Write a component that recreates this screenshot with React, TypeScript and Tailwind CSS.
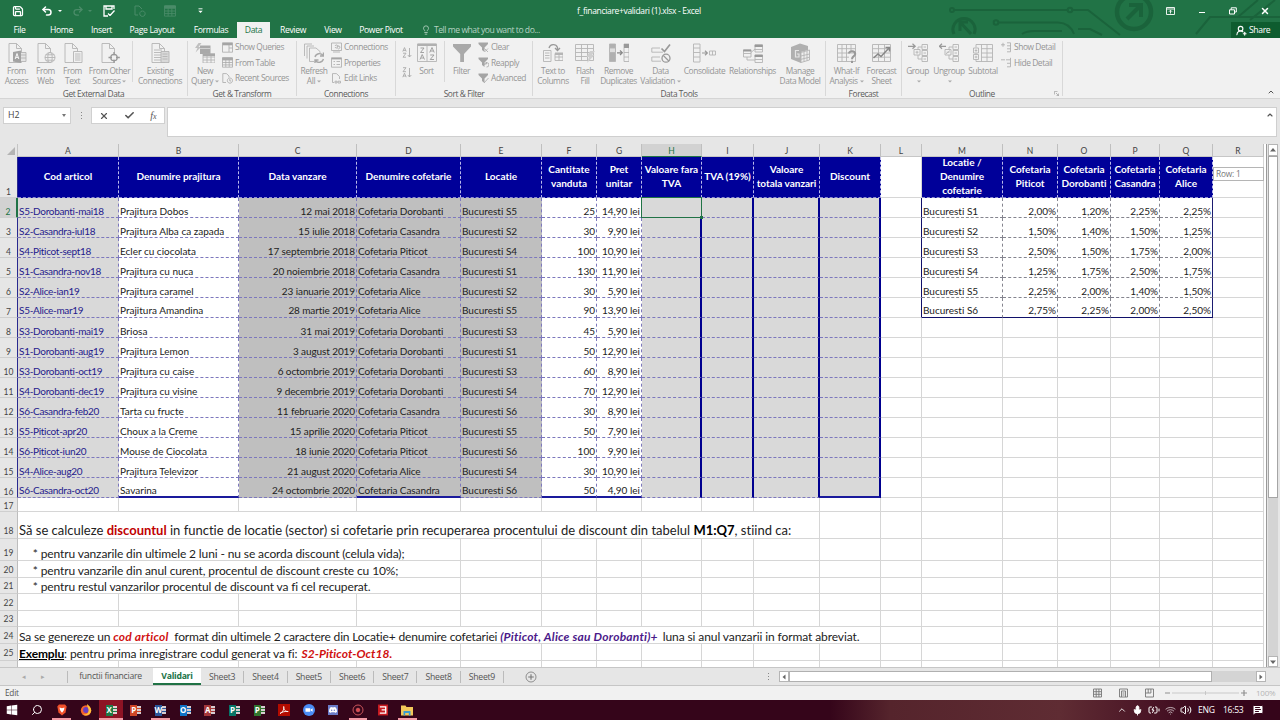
import type { ReactNode } from "react";
import { clsx } from "clsx";
import {
  BatteryCharging,
  Check,
  ChevronUp,
  Lightbulb,
  MessageSquareText,
  Mic,
  Redo2,
  Save,
  Search,
  Undo2,
  UserRoundPlus,
  Volume2,
  Wifi,
  X,
} from "lucide-react";
import { FaWindows } from "react-icons/fa";
import { SiDiscord } from "react-icons/si";

/* ---------- ribbon icons, drawn on a 20x20 box ---------- */

const Icon = ({ children, className = "size-5" }: { children: ReactNode; className?: string }) => (
  <svg viewBox="0 0 20 20" className={clsx("shrink-0", className)} fill="none" stroke="#b4b4b4" strokeWidth="0.9">
    {children}
  </svg>
);

const PAGE = "M2 .5H9.5L14.5 5.5V19.5H2ZM9.5 .5V5.5H14.5";

const FromAccess = () => (
  <Icon>
    <path d={PAGE} />
    <path d="M6 9 14 7.5V20L6 18.5Z" fill="#a2a2a2" stroke="none" />
    <path d="M8.2 16 10 10.5 11.8 16M8.8 14.4H11.2" stroke="#fff" />
    <path d="M14 9.5H19V18.5H14M14 12H19M14 15H19" fill="#e4e4e4" />
  </Icon>
);
const FromWeb = () => (
  <Icon>
    <path d={PAGE} />
    <circle cx="14" cy="14.5" r="5" fill="#f1f1f1" />
    <ellipse cx="14" cy="14.5" rx="2.2" ry="5" />
    <path d="M9 14.5H19M9.8 11.8H18.2M9.8 17.2H18.2" />
  </Icon>
);
const FromText = () => (
  <Icon>
    <path d={PAGE} />
    <path d="M10.5 8.5H19V19.5H10.5ZM12 11H17.5M12 13H17.5M12 15H17.5M12 17H17.5" fill="#f1f1f1" />
  </Icon>
);
const FromOther = () => (
  <Icon>
    <path d={PAGE} />
    <circle cx="14" cy="14.5" r="3.2" fill="#f1f1f1" stroke="#999" strokeWidth="1.3" />
    <path d="M14 9V12.6M14 16.4V20M8.5 14.5H12M16 14.5H19.8" stroke="#999" strokeWidth="1.3" />
  </Icon>
);
const Existing = () => (
  <Icon>
    <path d={PAGE} />
    <path d="M4 7H12M4 9.5H12M4 12H11M4 14.5H11M4 17H11" />
    <path d="M11 8.5H19V19.5H11ZM12.5 11H17.5M12.5 13.5H17.5M12.5 16H17.5" fill="#d9d9d9" />
  </Icon>
);
const NewQuery = () => (
  <Icon>
    <path d="M3.5 0 0 5H2.5L.5 9.5 6 4H3.5L6.500 0Z" fill="#c0c0c0" stroke="none" />
    <path d="M5 2.500H15.500V11H5Z" fill="#a9a9a9" stroke="none" />
    <path d="M5 5.500H15.500" stroke="#d5d5d5" />
    <path d="M8 11H20V20H8ZM8 14H20M8 17H20M12 11V20M16 11V20" fill="#f1f1f1" />
    <path d="M8 10.5H20V13H8Z" fill="#a9a9a9" stroke="none" />
  </Icon>
);
const Refresh = () => (
  <Icon>
    <path d="M.5 13V1H8M3 15.5V3H10M5.5 18.5V5H12L16 8.5V10M5.5 18.5H10" />
    <path
      d="M11 14A4.5 4.5 0 0 1 19 12.5M19.5 9.5V13H16M19.5 16A4.5 4.5 0 0 1 11.5 17.5M11 20.3V17H14.5"
      stroke="#a8a8a8"
      strokeWidth="1.4"
    />
  </Icon>
);
const SortBox = () => (
  <Icon>
    <path d="M.5 1H19.5V18.5H.5ZM10 1V18.5" />
    <path d="M.5 .7H19.5V3H.5Z" fill="#b0b0b0" stroke="none" />
    <path
      d="M3.5 5H7L3.5 9.5H7M3 16.5 5.2 11.5 7.5 16.5M4 15H6.7M12.7 9.5 15 4.5 17.2 9.5M13.5 8H16.3M13.2 12H17L13.2 16.5H17"
      stroke="#999"
    />
  </Icon>
);
const Funnel = () => (
  <Icon>
    <path d="M1 1H19V3.5L12 11V19H8.2V11L1 3.5Z" fill="#a9a9a9" stroke="none" />
  </Icon>
);
const TextToColumns = () => (
  <Icon>
    <path d="M.5 7.5H8V18.5H.5ZM2 10H6.5M2 12.5H6.5M2 15H6.5M12 10.5H20V17.5H12ZM12 14H20M16 10.5V17.5" />
    <path d="M12 9.5H20V12H12Z" fill="#b5b5b5" stroke="none" />
    <path d="M6 5A4.5 4.5 0 0 1 14.5 4.5V7M12 5 14.5 7.5 17 5" stroke="#999" strokeWidth="1.3" />
  </Icon>
);
const FlashFill = () => (
  <Icon>
    <path d="M.5 1.5H18.5V17.5H.5ZM.5 5.5H18.5M.5 9.5H18.5M.5 13.5H18.5M6.5 1.5V17.5M12.5 1.5V17.5" />
    <path d="M15 8H20L17 12H19.5L12 20 14 14H11.5Z" fill="#cfcfcf" stroke="none" />
  </Icon>
);
const RemoveDup = () => (
  <Icon>
    <path d="M.5 1H6.5V18.5H.5Z" fill="#b0b0b0" />
    <path d="M.5 5H6.5V9.5H.5Z" fill="#dedede" />
    <path d="M15 1H20V18.5H15ZM15 9.5H20M15 14H20" />
    <path d="M15 1H20V5H15Z" fill="#999" stroke="none" />
    <path d="M8 9.8H13M11 7.5 13.3 9.8 11 12" stroke="#888" strokeWidth="1.2" />
  </Icon>
);
const DataValidation = () => (
  <Icon>
    <path d="M9 5H.8V9.2H12M9 14H.8V18.2H10" />
    <path d="M10.5 5.5 13.5 8.5 19 1.5" stroke="#999" strokeWidth="1.7" />
    <circle cx="15" cy="15.2" r="4" stroke="#999" strokeWidth="1.3" />
    <path d="M12.2 12.4 17.8 18" stroke="#999" strokeWidth="1.3" />
  </Icon>
);
const Consolidate = () => (
  <Icon className="h-5 w-[23px]">
    <path d="M-1 1H5.5V19H-1ZM-1 5H5.5M-1 9.5H5.5M-1 14H5.5M15 8H21V12H15ZM18 8V12" />
    <path d="M7.5 10H12.5M10.5 7.8 12.8 10 10.5 12.2" stroke="#999" strokeWidth="1.2" />
  </Icon>
);
const Relationships = () => (
  <Icon>
    <path d="M.5 7H8V14H.5ZM.5 10.5H8M12 2H19.5V9H12ZM12 6.5H19.5M12 12H19.5V19.5H12ZM12 16.5H19.5M8 9.5 12 6M4 14V17H12" />
    <path d="M.3 6.5H8.2V8.6H.3ZM11.7 1.5H19.7V4H11.7ZM11.7 11.7H19.7V14H11.7Z" fill="#999" stroke="none" />
  </Icon>
);
const DataModel = () => (
  <Icon>
    <path d="M1 4 10 .5 18 3V7L11 9V20L1 16Z" fill="#b0b0b0" stroke="none" />
    <path d="M11 9.5 19.5 7V17L11 19.5ZM14 8.5V18.6M17 7.7V17.7M11 13 19.5 11M11 16.3 19.5 14.2" fill="#eee" />
    <path d="M9 7.500H5.500V14H9V11H7" stroke="#e5e5e5" strokeWidth="1.2" />
  </Icon>
);
const WhatIf = () => (
  <Icon>
    <path d="M.5 1.5H18.5V18.5H.5ZM.5 5.7H18.5M.5 10H18.5M.5 14.2H12M5 1.5V18.5M9.5 1.5V18.5M14 1.5V8" />
    <path d="M12 10.5C12 7.5 18.2 7.5 18.2 11 18.2 13.3 15 13 15 16.2M15 17.8V20" stroke="#999" strokeWidth="2" />
  </Icon>
);
const ForecastSheet = () => (
  <Icon>
    <path d="M.5 1.5H18.5V18.5H.5ZM.5 5.7H18.5M.5 10H18.5M.5 14.2H18.5M6.5 1.5V18.5M12.5 1.5V18.5" />
    <path d="M1.5 15 6 11 9 13.5 17 5M13.5 4.5H17.5V8.5" stroke="#888" strokeWidth="1.5" />
  </Icon>
);
const GroupIcon = ({ un }: { un?: boolean }) => (
  <Icon>
    <path d="M14 1.5H19.500V6.5H14ZM14 7.5H19.500V12.5H14ZM14 13.5H19.500V18.5H14ZM15.500 4H18M15.500 10H18M15.500 16H18M10 4H14M10 16H14M10 4V7M10 12V16" />
    <path d="M6 6.5H12V12H6ZM7.5 9.2H10.5" />
    {un ? <path d="M7 11 11 7.5" /> : <path d="M9 7.8V10.8" />}
    <path d={un ? "M0 3.3H7M3 .8 .4 3.3 3 5.8" : "M0 3.3H7M4.5 .8 7.2 3.3 4.5 5.8"} stroke="#999" strokeWidth="1.2" />
  </Icon>
);
const SubtotalIcon = () => (
  <Icon>
    <path d="M3 4.5V1.5H19.5V18.5H3V16M3 11V10M8.5 1.5V18.5M14 1.5V18.5M8.5 5.7H19.5M8.5 10H19.5M8.5 14.2H19.5M.5 5H5.5V10H.5ZM.5 11.5H5.5V16.5H.5ZM1.7 7.5H4.3M3 6.2V8.8M1.7 14H4.3M3 12.7V15.3" />
  </Icon>
);

const small = "size-[11px]";
const TableIcon = ({ className = small, stroke = "#a9a9a9" }: { className?: string; stroke?: string }) => (
  <svg viewBox="0 0 11 11" className={clsx("shrink-0", className)} fill="none" stroke={stroke} strokeWidth="0.8">
    <path d="M.5 .8H10.5V10.2H.5ZM.5 5.5H10.5M.5 7.9H10.5M3.8 3V10M7.2 3V10" />
    <path d="M.5 .8H10.5V3H.5Z" fill={stroke} />
  </svg>
);
const SmallSvg = ({ d, fill }: { d: string; fill?: string }) => (
  <svg viewBox="0 0 11 11" className={clsx("shrink-0", small)} fill="none" stroke="#a9a9a9" strokeWidth="0.8">
    {fill && <path d={fill} fill="#a5a5a5" stroke="none" />}
    <path d={d} />
  </svg>
);
const FUNNEL = "M.5 .5H10V2L6.5 5.5V10L4 8V5.5L.5 2Z";

/* ---------- ribbon parts ---------- */

const Caret = () => (
  <svg viewBox="0 0 4 3" className="ml-0.5 inline h-[3px] w-1 align-middle">
    <path d="M0 .5H4L2 2.5Z" fill="#aaa" />
  </svg>
);

type BigProps = { icon: ReactNode; top: string; bottom?: string; caret?: boolean; width: string };
const Big = ({ icon, top, bottom, caret, width }: BigProps) => (
  <div className={clsx("flex shrink-0 flex-col items-center pt-[5px] whitespace-nowrap text-[#959595]", width)}>
    {icon}
    <span className="mt-[2.5px] text-[8.4px] leading-[10.5px]">{top}</span>
    <span className="text-[8.4px] leading-[10.5px]">
      {bottom}
      {caret && <Caret />}
    </span>
  </div>
);

const SmallList = ({ items, className }: { items: [ReactNode, string][]; className?: string }) => (
  <div className={clsx("flex flex-col pt-0.5 whitespace-nowrap text-[#959595]", className)}>
    {items.map(([icon, label]) => (
      <div key={label} className="flex h-[15.3px] items-center gap-[2px] text-[8.4px]">
        {icon}
        {label}
      </div>
    ))}
  </div>
);

const Group = ({ label, width, children }: { label: string; width: string; children: ReactNode }) => (
  <div className={clsx("flex shrink-0 flex-col", width)}>
    <div className="flex h-[50px] shrink-0">{children}</div>
    <span className="text-center text-[8.4px] leading-[12px] whitespace-nowrap text-[#5a5a5a]">{label}</span>
  </div>
);

const Sep = ({ tall }: { tall?: boolean }) => (
  <div className={clsx("mt-[3px] w-px shrink-0 bg-[#d8d8d8]", tall ? "h-[55px]" : "h-[41px]")} />
);

const Ribbon = () => (
  <div className="flex h-[61px] border-b border-[#d5d5d5] bg-[#f1f1f1] tracking-[-0.42px]">
    <Group label="Get External Data" width="w-[187px]">
      <Big icon={<FromAccess />} top="From" bottom="Access" width="w-[33px]" />
      <Big icon={<FromWeb />} top="From" bottom="Web" width="w-[25px]" />
      <Big icon={<FromText />} top="From" bottom="Text" width="w-[29px]" />
      <Big icon={<FromOther />} top="From Other" bottom="Sources" caret width="w-[45px]" />
      <Sep />
      <Big icon={<Existing />} top="Existing" bottom="Connections" width="w-[54px]" />
    </Group>
    <Sep tall />
    <Group label="Get & Transform" width="w-[108px]">
      <Big icon={<NewQuery />} top="New" bottom="Query" caret width="w-[34px]" />
      <SmallList
        items={[
          [<SmallSvg key="q" d="M.5 .8H10.5V10.2H.5ZM7 3V10M7 6H10.5" fill="M.5 .8H10.5V3.3H.5Z" />, "Show Queries"],
          [<TableIcon key="t" />, "From Table"],
          [<SmallSvg key="r" d="M4 9.5H.8V.6H4.5L7 3V4.5M8 5A2.6 2.6 0 1 1 7.9 5M7.8 6V8H9.2" />, "Recent Sources"],
        ]}
      />
    </Group>
    <Sep tall />
    <Group label="Connections" width="w-[98px]">
      <Big icon={<Refresh />} top="Refresh" bottom="All" caret width="w-[34px]" />
      <SmallList
        items={[
          [<SmallSvg key="c" d="M.5 1H10.5V8.5H.5ZM2 10H9M4 4A1.5 1.5 0 1 1 4 5M6 5A1.5 1.5 0 1 1 6.5 6.5" />, "Connections"],
          [<SmallSvg key="p" d="M.5 .8H10.5V10.2H.5ZM2.5 4.5H4M5.5 4.5H9M2.5 7.5H4M5.5 7.5H9" fill="M.5 .8H10.5V2.4H.5Z" />, "Properties"],
          [<SmallSvg key="e" d="M3 9.5H1.5V.6H5.5L8.5 3.5V6M4 8.2H6V10H4ZM7 8.2H9.5V10H7Z" />, "Edit Links"],
        ]}
      />
    </Group>
    <Sep tall />
    <Group label="Sort & Filter" width="w-[136px]">
      <div className="flex w-[21px] flex-col items-center gap-[9px] pt-[9px]">
        <svg viewBox="0 0 10 11" className="h-[11px] w-[10px]" fill="none" stroke="#aaa" strokeWidth="0.9">
          <path d="M.8 4.5 2.5 .6 4.2 4.5M1.2 3.4H3.8M1 6.2H4L1 10.2H4M7.5 1V10M5.8 8 7.5 10 9.3 8" />
        </svg>
        <svg viewBox="0 0 10 11" className="h-[11px] w-[10px]" fill="none" stroke="#aaa" strokeWidth="0.9">
          <path d="M1 .7H4L1 4.7H4M.8 10.2 2.5 6.2 4.2 10.2M1.2 9H3.8M7.5 1V10M5.8 8 7.5 10 9.3 8" />
        </svg>
      </div>
      <Big icon={<SortBox />} top="Sort" width="w-[19px]" />
      <div className="w-2" />
      <Sep />
      <Big icon={<Funnel />} top="Filter" width="w-[33px]" />
      <SmallList
        items={[
          [<SmallSvg key="c" d="M6.5 6.5 10 10M10 6.5 6.5 10" fill={FUNNEL} />, "Clear"],
          [<SmallSvg key="r" d="M6.5 8A2.2 2.2 0 1 1 8.5 10M8.5 5V7H6.5" fill={FUNNEL} />, "Reapply"],
          [<SmallSvg key="a" d="M6 10 10.5 5" fill={FUNNEL} />, "Advanced"],
        ]}
      />
    </Group>
    <Sep tall />
    <Group label="Data Tools" width="w-[292px]">
      <Big icon={<TextToColumns />} top="Text to" bottom="Columns" width="w-[40px]" />
      <Big icon={<FlashFill />} top="Flash" bottom="Fill" width="w-[24px]" />
      <Big icon={<RemoveDup />} top="Remove" bottom="Duplicates" width="w-[43px]" />
      <Big icon={<DataValidation />} top="Data" bottom="Validation" caret width="w-[41px]" />
      <Big icon={<Consolidate />} top="Consolidate" width="w-[47px]" />
      <Big icon={<Relationships />} top="Relationships" width="w-[49px]" />
      <Big icon={<DataModel />} top="Manage" bottom="Data Model" width="w-[46px]" />
    </Group>
    <Sep tall />
    <Group label="Forecast" width="w-[75px]">
      <Big icon={<WhatIf />} top="What-If" bottom="Analysis" caret width="w-[41px]" />
      <Big icon={<ForecastSheet />} top="Forecast" bottom="Sheet" width="w-[29px]" />
    </Group>
    <Sep tall />
    <Group label="Outline" width="w-[160px]">
      <Big icon={<GroupIcon />} top="Group" caret width="w-[31px]" />
      <Big icon={<GroupIcon un />} top="Ungroup" caret width="w-[32px]" />
      <Big icon={<SubtotalIcon />} top="Subtotal" width="w-[36px]" />
      <SmallList
        items={[
          [<SmallSvg key="s" d="M0 2.8H4M2 .8V4.8M6 .8H9.5M6 3.8H9.5M6 6.8H9.5M6 9.8H9.5M9.5 .8V9.8" />, "Show Detail"],
          [<SmallSvg key="h" d="M0 2.8H4M5 2.8H9.5M6 6.3H9.5M6 9.8H9.5M9.5 .8V9.8" />, "Hide Detail"],
        ]}
      />
    </Group>
    <Sep tall />
    <div className="flex flex-1 items-end justify-between pb-0.5">
      <svg viewBox="0 0 5 5" className="-ml-[9px] size-[5px]" fill="none" stroke="#999" strokeWidth="0.7">
        <path d="M.4 3.5V.4H3.5M2 2 4.6 4.6M4.6 2.5V4.6H2.5" />
      </svg>
      <ChevronUp className="mr-[5px] size-2 text-[#555]" strokeWidth={3} />
    </div>
  </div>
);

/* ---------- title bar, tabs ---------- */

const TitleBar = () => (
  <div className="relative h-[38px] bg-[#217346] text-white">
    <svg viewBox="0 0 340 38" className="absolute top-0 right-0 h-[38px] w-[340px]" fill="none" stroke="#1a633b" strokeWidth="2">
      <circle cx="12" cy="10" r="2" />
      <path d="M14 10H128" />
      <circle cx="130" cy="10" r="2.3" />
      <path d="M132 10H148L180 35" />
      <circle cx="56" cy="22.5" r="2.3" />
      <path d="M58 22.5H118Q130 23 134 34M82 34Q87 31 94 31H122M138 29H150L162 35" />
      <path d="M14 34A11 11 0 1 1 34 34M20 22 31 34M20 31V22H28" strokeWidth="3" />
      <circle cx="194" cy="12" r="17" strokeWidth="4.5" />
      <path d="M187 19 201 5M189 5H201V17" strokeWidth="4" />
      <path d="M256 34 270 17H340M298 17 318 0M310 20 335 0" />
    </svg>
    <div className="relative flex h-[22px] items-center">
      <div className="flex w-[640px] items-center">
        <Save className="ml-[12px] size-[12px]" strokeWidth={2.5} />
        <Undo2 className="ml-[17px] size-[12px]" strokeWidth={3} />
        <span className="ml-[5px] h-0 border-x-2 border-t-2 border-x-transparent border-t-white" />
        <Redo2 className="ml-[10px] size-[12px] text-[#4b8c69]" strokeWidth={2.5} />
        <span className="ml-[4px] h-0 border-x-2 border-t-2 border-x-transparent border-t-[#4b8c69]" />
        <svg viewBox="0 0 12 12" className="ml-[11px] size-[12px]" fill="none" stroke="white">
          <path d="M5 11H1V1H11V4M3 1V4H9V1M7 10.5 11.5 5.5M5 8.5 7 10.5" strokeWidth="1.3" />
        </svg>
        <svg viewBox="0 0 12 12" className="ml-[19px] size-[12px]" fill="none" stroke="#4b8c69">
          <path d="M4 10H1V1H5L8 4M8.5 6A2.7 2.7 0 1 1 8.4 6" />
        </svg>
        <TableIcon className="ml-[18px] size-[12px]" stroke="#4b8c69" />
        <svg viewBox="0 0 5 6" className="ml-[22px] h-[6px] w-[5px]">
          <path d="M.5 .8H4.5" stroke="white" strokeWidth="0.9" />
          <path d="M.3 2.8H4.7L2.5 5Z" fill="white" />
        </svg>
      </div>
      <span className="absolute left-[577px] text-[8.5px] tracking-[-0.33px] whitespace-nowrap">
        f_financiare+validari (1).xlsx - Excel
      </span>
      <div className="ml-auto flex items-center">
        <svg viewBox="0 0 9 8" className="mr-[24px] h-2 w-[9px]" fill="none" stroke="white" strokeWidth="0.9">
          <path d="M.5 .5H8.5V7.5H.5ZM.5 2H8.5M4.5 6.5V3.3M3 4.7 4.5 3.2 6 4.7" />
        </svg>
        <span className="mt-[3px] mr-[24px] h-px w-[6px] bg-white" />
        <svg viewBox="0 0 8 8" className="mr-[23px] size-2" fill="none" stroke="white">
          <path d="M.5 2.8H5.5V7H.5ZM2.2 2.8V.8H7.3V5H5.5" />
        </svg>
        <X className="mr-[10px] size-[10px]" strokeWidth={3.5} />
      </div>
    </div>
    <div className="relative flex h-4 items-center text-center text-[8.6px] tracking-[-0.35px] whitespace-nowrap">
      <span className="w-[39px]">File</span>
      <span className="w-[45px]">Home</span>
      <span className="w-[35px]">Insert</span>
      <span className="w-[66px]">Page Layout</span>
      <span className="w-[52px]">Formulas</span>
      <span className="h-full w-[33px] bg-[#f1f1f1] leading-4 text-[#217346]">Data</span>
      <span className="w-[46px]">Review</span>
      <span className="w-[34px]">View</span>
      <span className="w-[62px]">Power Pivot</span>
      <span className="ml-[9px] flex items-center gap-[3px] tracking-[-0.47px] text-[#b5d2c2]">
        <Lightbulb className="size-[10px]" />
        Tell me what you want to do...
      </span>
      <span className="ml-auto flex h-full w-[49px] items-center gap-[2px] bg-[#0e5c2f] pl-[5px]">
        <UserRoundPlus className="size-[11px]" strokeWidth={2.5} />
        Share
      </span>
    </div>
  </div>
);

const FormulaBar = () => (
  <div className="flex h-[45px] items-start bg-[#e6e6e6] pt-2 pl-[3px]">
    <div className="flex h-[17px] w-[68px] items-center justify-between border border-[#d0d0d0] bg-white px-1 text-[8.8px] text-[#444]">
      H2
      <span className="h-0 border-x-[2.5px] border-t-[3px] border-x-transparent border-t-[#777]" />
    </div>
    <div className="flex h-[17px] w-[20px] flex-col items-center justify-center gap-[2px]">
      <i className="size-px bg-[#888]" />
      <i className="size-px bg-[#888]" />
      <i className="size-px bg-[#888]" />
    </div>
    <div className="flex h-[17px] w-[74px] items-center justify-around border border-[#d0d0d0] bg-white text-[#555]">
      <X className="size-[10px]" strokeWidth={2.8} />
      <Check className="size-[11px]" strokeWidth={3.5} />
      <span className="font-['Liberation_Serif'] text-[10px] leading-none italic">
        f<span className="text-[8px]">x</span>
      </span>
    </div>
    <div className="ml-[2px] flex h-[30px] w-[1110px] items-start justify-end border border-[#cfcfcf] bg-white pt-[3px] pr-[2px]">
      <ChevronUp className="size-2 text-[#555]" strokeWidth={3.5} />
    </div>
  </div>
);

/* ---------- worksheet ---------- */

const COLS = [
  { id: "A", w: "w-[101px]" },
  { id: "B", w: "w-[120px]" },
  { id: "C", w: "w-[118px]" },
  { id: "D", w: "w-[104px]" },
  { id: "E", w: "w-[81px]" },
  { id: "F", w: "w-[55px]" },
  { id: "G", w: "w-[45px]" },
  { id: "H", w: "w-[60px]" },
  { id: "I", w: "w-[52px]" },
  { id: "J", w: "w-[66px]" },
  { id: "K", w: "w-[61px]" },
  { id: "L", w: "w-[41px]" },
  { id: "M", w: "w-[81px]" },
  { id: "N", w: "w-[55px]" },
  { id: "O", w: "w-[53px]" },
  { id: "P", w: "w-[49px]" },
  { id: "Q", w: "w-[53px]" },
  { id: "R", w: "w-[51px]" },
];

const TITLES: Record<string, string> = {
  A: "Cod articol",
  B: "Denumire prajitura",
  C: "Data vanzare",
  D: "Denumire cofetarie",
  E: "Locatie",
  F: "Cantitate\nvanduta",
  G: "Pret\nunitar",
  H: "Valoare fara\nTVA",
  I: "TVA (19%)",
  J: "Valoare\ntotala vanzari",
  K: "Discount",
  M: "Locatie /\nDenumire\ncofetarie",
  N: "Cofetaria\nPiticot",
  O: "Cofetaria\nDorobanti",
  P: "Cofetaria\nCasandra",
  Q: "Cofetaria\nAlice",
};

const SALES = [
  ["S5-Dorobanti-mai18", "Prajitura Dobos", "12 mai 2018", "Cofetaria Dorobanti", "Bucuresti S5", "25", "14,90 lei"],
  ["S2-Casandra-iul18", "Prajitura Alba ca zapada", "15 iulie 2018", "Cofetaria Casandra", "Bucuresti S2", "30", "9,90 lei"],
  ["S4-Piticot-sept18", "Ecler cu ciocolata", "17 septembrie 2018", "Cofetaria Piticot", "Bucuresti S4", "100", "10,90 lei"],
  ["S1-Casandra-nov18", "Prajitura cu nuca", "20 noiembrie 2018", "Cofetaria Casandra", "Bucuresti S1", "130", "11,90 lei"],
  ["S2-Alice-ian19", "Prajitura caramel", "23 ianuarie 2019", "Cofetaria Alice", "Bucuresti S2", "30", "5,90 lei"],
  ["S5-Alice-mar19", "Prajitura Amandina", "28 martie 2019", "Cofetaria Alice", "Bucuresti S5", "90", "13,90 lei"],
  ["S3-Dorobanti-mai19", "Briosa", "31 mai 2019", "Cofetaria Dorobanti", "Bucuresti S3", "45", "5,90 lei"],
  ["S1-Dorobanti-aug19", "Prajitura Lemon", "3 august 2019", "Cofetaria Dorobanti", "Bucuresti S1", "50", "12,90 lei"],
  ["S3-Dorobanti-oct19", "Prajitura cu caise", "6 octombrie 2019", "Cofetaria Dorobanti", "Bucuresti S3", "60", "8,90 lei"],
  ["S4-Dorobanti-dec19", "Prajitura cu visine", "9 decembrie 2019", "Cofetaria Dorobanti", "Bucuresti S4", "70", "12,90 lei"],
  ["S6-Casandra-feb20", "Tarta cu fructe", "11 februarie 2020", "Cofetaria Casandra", "Bucuresti S6", "30", "8,90 lei"],
  ["S5-Piticot-apr20", "Choux a la Creme", "15 aprilie 2020", "Cofetaria Piticot", "Bucuresti S5", "50", "7,90 lei"],
  ["S6-Piticot-iun20", "Mouse de Ciocolata", "18 iunie 2020", "Cofetaria Piticot", "Bucuresti S6", "100", "9,90 lei"],
  ["S4-Alice-aug20", "Prajitura Televizor", "21 august 2020", "Cofetaria Alice", "Bucuresti S4", "30", "10,90 lei"],
  ["S6-Casandra-oct20", "Savarina", "24 octombrie 2020", "Cofetaria Casandra", "Bucuresti S6", "50", "4,90 lei"],
];

const RATES = [
  ["Bucuresti S1", "2,00%", "1,20%", "2,25%", "2,25%"],
  ["Bucuresti S2", "1,50%", "1,40%", "1,50%", "1,25%"],
  ["Bucuresti S3", "2,50%", "1,50%", "1,75%", "2,00%"],
  ["Bucuresti S4", "1,25%", "1,75%", "2,50%", "1,75%"],
  ["Bucuresti S5", "2,25%", "2,00%", "1,40%", "1,50%"],
  ["Bucuresti S6", "2,75%", "2,25%", "2,00%", "2,50%"],
];

const RowNumber = ({ n, active }: { n: number | string; active?: boolean }) => (
  <div
    className={clsx(
      "flex w-[18px] shrink-0 items-end justify-center border-b border-b-[#cfcfcf] text-[8.5px]",
      Number(n) >= 18 ? "leading-[13px]" : "leading-[10px]",
      active ? "border-r-2 border-r-[#217346] bg-[#d2d2d2] text-[#217346]" : "border-r bg-[#e6e6e6] text-[#444]",
      !active && (Number(n) > 0 && Number(n) <= 16 ? "border-r-[#2a2a90]" : "border-r-[#bdbdbd]"),
    )}
  >
    {n}
  </div>
);

const ColumnHeaders = () => (
  <div className="flex h-[13px] bg-[#e6e6e6] text-[8.5px] text-[#444]">
    <div className="flex w-[18px] items-end justify-end border-r border-[#c4c4c4] pr-[2px] pb-[2px]">
      <svg viewBox="0 0 8 8" className="size-2">
        <path d="M8 0V8H0Z" fill="#b4b4b4" />
      </svg>
    </div>
    {COLS.map(({ id, w }) => (
      <div
        key={id}
        className={clsx(
          "border-r border-b border-r-[#bfbfbf] text-center leading-[14px]",
          w,
          id === "H" ? "border-b-[#217346] bg-[#d2d2d2] text-[#217346]" : "border-b-[#c6c6c6]",
        )}
      >
        {id}
      </div>
    ))}
  </div>
);

const TitleRow = () => (
  <div className="flex h-[41px]">
    <RowNumber n={1} />
    {COLS.map(({ id, w }) => (
      <div
        key={id}
        className={clsx(
          "flex shrink-0 items-center justify-center overflow-hidden border-r border-b pb-[2px] text-center text-[10px] leading-[14px] font-bold whitespace-pre",
          w,
          TITLES[id] ? "border-dashed border-r-[#b9b9ea] border-b-[#8c8cd0] bg-[#000099] text-white" : "border-[#d6d6d6]",
        )}
      >
        {TITLES[id]}
      </div>
    ))}
  </div>
);

const cellLook = (id: string, row: number) => {
  if (id >= "A" && id <= "K") {
    return clsx(
      "border-dashed",
      id >= "H" ? "[border-right-style:solid] border-r-2 border-r-[#00008f] bg-[#d9d9d9]" : "border-r border-r-[#7d78bd]",
      row === 16 && "BDFGK".includes(id)
        ? "[border-bottom-style:solid] border-b-2 border-b-[#1a1a9c]"
        : "border-b border-b-[#7d78bd]",
      id === "A" && "bg-[#d9d9d9]",
      id >= "C" && id <= "E" && "bg-[#bfbfbf]",
    );
  }
  if (id >= "M" && id <= "Q" && row <= 7) {
    return clsx(
      "border-r border-b border-dashed",
      id === "Q" ? "[border-right-style:solid] border-r-[#1c1c70]" : "border-r-[#85858f]",
      row === 7 ? "[border-bottom-style:solid] border-b-[#10106a]" : "border-b-[#85858f]",
    );
  }
  if (id === "L" && row <= 7) return "border-r border-b border-b-[#d6d6d6] border-r-[#10106a]";
  return "border-r border-b border-[#d6d6d6]";
};

const DataRow = ({ row }: { row: number }) => {
  const sale = SALES[row - 2];
  const rate = RATES[row - 2];
  return (
    <div className="flex h-5">
      <RowNumber n={row} active={row === 2} />
      {COLS.map(({ id, w }, i) => (
        <div
          key={id}
          className={clsx(
            "relative flex h-5 shrink-0 items-start px-[1px] text-[10px] leading-[13px] whitespace-nowrap",
            row === 7 || row === 16 ? "pt-[6px]" : "pt-[7px]",
            w,
            id === "A" ? "tracking-[-0.3px] text-[#1f1a8c]" : "text-[#222]",
            (id === "C" || id === "D") && "tracking-[-0.1px]",
            "CFGNOPQ".includes(id) && "justify-end",
            cellLook(id, row),
          )}
        >
          {sale[i] ?? (rate && i > 11 ? rate[i - 12] : null)}
          {id === "H" && row === 2 && (
            <div className="absolute -top-px -right-[2px] -bottom-px -left-px z-10 border border-[#217346] bg-[#d9d9d9]">
              <i className="absolute -right-[2px] -bottom-[2px] size-[3px] bg-[#217346]" />
            </div>
          )}
        </div>
      ))}
    </div>
  );
};

type NoteRowProps = { n: number | string; height: string; skip?: number; span?: string; size?: string; children?: ReactNode };
/* a row whose first cell spills its text over the `skip` leading columns */
const NoteRow = ({ n, height, skip = 0, span, size = "text-[12px] tracking-[-0.12px]", children }: NoteRowProps) => (
  <div className={clsx("flex shrink-0 overflow-hidden", height)}>
    <RowNumber n={n} />
    {span && (
      <div
        className={clsx(
          "flex shrink-0 items-end border-r border-b border-[#d6d6d6] pl-[1px] leading-[15px] whitespace-pre text-[#222]",
          span,
          size,
        )}
      >
        <span className="relative top-px">{children}</span>
      </div>
    )}
    {COLS.slice(skip).map(({ id, w }) => (
      <div key={id} className={clsx("shrink-0 border-r border-b border-[#d6d6d6]", w)} />
    ))}
  </div>
);

const ScrollArrow = ({ d, className }: { d: string; className: string }) => (
  <div className={clsx("flex shrink-0 items-center justify-center border border-[#b5b5b5] bg-white", className)}>
    <svg viewBox="0 0 6 6" className="size-[6px]">
      <path d={d} fill="#666" />
    </svg>
  </div>
);

const Sheet = () => (
  <div className="flex h-[523px] bg-[#e6e6e6]">
    <div className="flex w-[1264px] shrink-0 flex-col overflow-hidden bg-white font-[Lato,'Noto_Sans',sans-serif] [font-variant-ligatures:none]">
      <ColumnHeaders />
      <TitleRow />
      {SALES.map((_, i) => (
        <DataRow key={i} row={i + 2} />
      ))}
      <NoteRow n={17} height="h-[14px]" />
      <NoteRow n={18} height="h-[27px]" skip={10} span="w-[802px]" size="pb-[1px] text-[13px]">
        Să se calculeze <b className="text-[#c00000]">discountul</b> in functie de locatie (sector) si cofetarie prin recuperarea
        procentului de discount din tabelul <b className="text-black">M1:Q7</b>, stiind ca:
      </NoteRow>
      <NoteRow n={19} height="h-[22px]" skip={4} span="w-[443px]">
        <span className="pl-[2px]">{"    * pentru vanzarile din ultimele 2 luni - nu se acorda discount (celula vida);"}</span>
      </NoteRow>
      <NoteRow n={20} height="h-[17px]" skip={4} span="w-[443px]">
        <span className="pl-[2px]">{"    * pentru vanzarile din anul curent, procentul de discount creste cu 10%;"}</span>
      </NoteRow>
      <NoteRow n={21} height="h-[16px]" skip={4} span="w-[443px]">
        <span className="pl-[2px]">{"    * pentru restul vanzarilor procentul de discount va fi cel recuperat."}</span>
      </NoteRow>
      <NoteRow n={22} height="h-[17px]" />
      <NoteRow n={23} height="h-[16px]" />
      <NoteRow n={24} height="h-[17px]" skip={11} span="w-[863px]" size="text-[12px] tracking-[-0.17px]">
        Sa se genereze un <b className="tracking-[0.22px] text-[#d01010] italic">cod articol</b>
        {"  format din ultimele 2 caractere din Locatie+ denumire cofetariei "}
        <b className="tracking-[0.22px] text-[#4b1a8a] italic">(Piticot, Alice sau Dorobanti)+</b>
        <span className="ml-[2px] tracking-[-0.1px]"> luna si anul vanzarii in format abreviat.</span>
      </NoteRow>
      <NoteRow n={25} height="h-[17px]" skip={4} span="w-[443px]">
        <b className="text-black underline">Exemplu</b>: pentru prima inregistrare codul generat va fi:{" "}
        <b className="ml-px tracking-[0.05px] text-[#d01010] italic">S2-Piticot-Oct18.</b>
      </NoteRow>
      <NoteRow n="" height="h-[7px]" />
    </div>
    <div className="w-[3px] border-r border-[#999] bg-white" />
    <div className="ml-px flex w-[10px] flex-col bg-[#d4d4d4]">
      <ScrollArrow d="M0 4.5H6L3 1Z" className="h-[12px]" />
      <div className="h-[342px] border border-[#a5a5a5] bg-white" />
      <ScrollArrow d="M0 1.5H6L3 5Z" className="mt-auto h-[11px]" />
    </div>
    {/* scroll position hint */}
    <div className="absolute top-[167px] left-[1213px] h-[14px] w-[51px] border border-[#b5b5b5] bg-white pl-[2px] text-[8.3px] leading-[11px] tracking-[-0.2px] text-[#777]">
      Row: 1
    </div>
  </div>
);

const SheetTabs = () => (
  <div className="flex h-[19px] items-center border-t border-b border-[#c6c6c6] bg-[#e6e6e6] text-center text-[8.7px] tracking-[-0.28px] whitespace-nowrap text-[#555]">
    <span className="flex w-[68px] justify-center gap-[15px] border-r border-[#bbb] text-[7px] leading-[12px] text-[#aaa]">
      <i className="not-italic">◂</i>
      <i className="not-italic">▸</i>
    </span>
    <span className="w-[85px]">functii financiare</span>
    <span className="h-full w-[48px] border-b-2 border-[#217346] bg-white leading-4 font-bold text-[#217346]">Validari</span>
    {[3, 4, 5, 6, 7, 8, 9].map((n) => (
      <span key={n} className="w-[43.3px] border-r border-[#bbb] leading-[12px]">
        Sheet{n}
      </span>
    ))}
    <svg viewBox="0 0 12 12" className="ml-[21px] size-[12px]" fill="none" stroke="#777">
      <circle cx="6" cy="6" r="5" strokeWidth="0.8" />
      <path d="M6 3.2V8.8M3.2 6H8.8" strokeWidth="1.1" />
    </svg>
    <span className="ml-auto mr-[10px] flex flex-col gap-[2px]">
      <i className="size-px bg-[#888]" />
      <i className="size-px bg-[#888]" />
      <i className="size-px bg-[#888]" />
    </span>
    <div className="mr-[14px] flex h-[11px] w-[487px] bg-[#d4d4d4]">
      <ScrollArrow d="M4.5 .5V5.5L1.5 3Z" className="w-[10px]" />
      <div className="w-[423px] border border-[#b0b0b0] bg-white" />
      <ScrollArrow d="M1.5 .5V5.5L4.5 3Z" className="ml-auto w-[10px]" />
    </div>
  </div>
);

const StatusBar = () => (
  <div className="flex h-[14px] items-center bg-[#f1f1f1] pr-[6px] pl-[5px] text-[8.2px] tracking-[-0.2px] text-[#555]">
    Edit
    <svg viewBox="0 0 62 10" className="ml-auto h-[10px] w-[62px]" fill="none" stroke="#777" strokeWidth="0.9">
      <path d="M.5 1H8.5V9H.5ZM.5 3.7H8.5M.5 6.3H8.5M3.2 1V9M5.9 1V9M26.5 1H34.5V9H26.5ZM28.5 3H32.5V9M28.5 3V9M29.5 5H31.5M29.5 7H31.5M52.5 9V1H60.5V9ZM55.2 1V5M57.9 1V5H52.5" />
    </svg>
    <svg viewBox="0 0 82 8" className="ml-[10px] h-2 w-[82px]" fill="none" stroke="#8f8f8f">
      <path d="M0 4H5M76 4H82M79 1V7" strokeWidth="1.2" />
      <path d="M7 4H74M40.500 2V6" stroke="#c0c0c0" strokeWidth="0.8" />
    </svg>
    <span className="ml-[9px] w-[18px] text-[8px] text-[#b5b5b5]">100%</span>
  </div>
);

/* ---------- taskbar ---------- */

const Office = ({ letter, color }: { letter: string; color: string }) => (
  <span className="relative flex h-[11px] w-[11px] items-center">
    <span className={clsx("z-10 flex h-[11px] w-[7px] items-center justify-center text-[8px] font-bold text-white", color)}>{letter}</span>
    <span className="flex h-2 w-1 flex-col justify-evenly bg-white/80">
      <i className={clsx("h-px", color)} />
      <i className={clsx("h-px", color)} />
    </span>
  </span>
);

type TaskbarApp = { id: string; icon: ReactNode; open?: boolean; active?: boolean };
const APPS: TaskbarApp[] = [
  { id: "start", icon: <FaWindows className="size-[12px]" /> },
  { id: "search", icon: <Search className="size-[12px] -scale-x-100" /> },
  {
    id: "brave",
    icon: (
      <svg viewBox="0 0 10 12" className="h-[12px] w-[10px]">
        <path d="M2 .5H8L9.700 2.500 8.500 8.500 5 11.500 1.500 8.500 .3 2.500Z" fill="#f1502b" />
        <path d="M2.500 3.500 5 4.300 7.500 3.500 7 6 5 8.800 3 6Z" fill="#fff" />
      </svg>
    ),
    open: true,
  },
  {
    id: "firefox",
    icon: (
      <svg viewBox="0 0 12 12" className="size-[12px]">
        <circle cx="6" cy="6.500" r="5.200" fill="#f5642a" />
        <circle cx="6" cy="6" r="2.900" fill="#6a3fc0" />
        <path d="M7 0C9 2 11.500 3.500 11.200 7 10.500 11 6 12.500 3 10.500 7 11 9 8.500 8.500 5.500 8.300 3.500 7 2.500 7 0Z" fill="#ffc23a" />
      </svg>
    ),
  },
  { id: "excel", icon: <Office letter="X" color="bg-[#1f7a48]" />, open: true, active: true },
  { id: "powerpoint", icon: <Office letter="P" color="bg-[#d04727]" /> },
  { id: "word", icon: <Office letter="W" color="bg-[#2b569b]" />, open: true },
  { id: "outlook", icon: <Office letter="O" color="bg-[#0f72c6]" /> },
  { id: "access", icon: <Office letter="A" color="bg-[#a4373a]" /> },
  { id: "publisher", icon: <Office letter="P" color="bg-[#077568]" /> },
  { id: "project", icon: <Office letter="P" color="bg-[#31752f]" /> },
  {
    id: "acrobat",
    icon: (
      <svg viewBox="0 0 12 12" className="size-[12px]">
        <path d="M0 0H12V12H0Z" fill="#b30b00" />
        <path d="M2 9.500C5 8 6.500 4.500 5.700 2.500 5 5 7.500 8 10.200 7.500 7 7 4 8 2 9.500" stroke="white" strokeWidth="0.9" fill="none" />
      </svg>
    ),
  },
  {
    id: "zoom",
    icon: (
      <svg viewBox="0 0 12 12" className="size-[12px]">
        <circle cx="6" cy="6" r="6" fill="#4a8cf5" />
        <path d="M2.500 4.200H7.200V7.800H2.500ZM7.700 5.500 9.600 4.200V7.800L7.700 6.500Z" fill="white" />
      </svg>
    ),
  },
  {
    id: "discord",
    icon: (
      <span className="flex h-[10px] w-[10px] items-center justify-center bg-[#6a7bc8]">
        <SiDiscord className="size-[8px]" />
      </span>
    ),
  },
  {
    id: "recorder",
    icon: (
      <svg viewBox="0 0 12 12" className="size-[12px]" fill="none" stroke="#c9555a">
        <circle cx="6" cy="6" r="5" />
        <circle cx="6" cy="6" r="1.800" fill="#e0474c" />
      </svg>
    ),
    open: true,
  },
  {
    id: "sumatra",
    icon: (
      <svg viewBox="0 0 11 12" className="h-[12px] w-[10px]">
        <path d="M0 0H11V12H0Z" fill="#c61a20" />
        <path d="M2 2.500H8.500V5.800H4M8.500 5.800V9.500H2" stroke="white" strokeWidth="1.500" fill="none" />
      </svg>
    ),
  },
  {
    id: "explorer",
    icon: (
      <svg viewBox="0 0 12 11" className="h-[11px] w-[12px]">
        <path d="M0 .5H4.500L5.500 2H12V10.500H0Z" fill="#f3c95a" />
        <path d="M2.500 10.500V6H9.500V10.500H7.800V8H4.200V10.500Z" fill="#3a9bd0" />
      </svg>
    ),
    open: true,
  },
];

const Taskbar = () => (
  <div className="flex h-[20px] bg-[linear-gradient(90deg,#35051a_0px,#35051a_830px,#55242c_890px,#5f2c33_1060px,#4a1526_1150px,#35051a_1220px)] text-white">
    {APPS.map(({ id, icon, open, active }) => (
      <div key={id} className={clsx("relative flex w-[24.7px] items-center justify-center", active && "bg-[#8d1324]")}>
        {icon}
        {open && <i className={clsx("absolute bottom-0 h-[2px] bg-[#f29aa5]", active ? "inset-x-0" : "inset-x-[3px]")} />}
      </div>
    ))}
    <div className="ml-auto flex items-center text-[8.6px] tracking-[-0.3px]">
      <ChevronUp className="mr-[5px] size-[10px]" />
      <Mic className="mr-[5px] size-[11px]" fill="white" />
      <BatteryCharging className="mr-[5px] size-[12px]" />
      <Wifi className="mr-[4px] size-[11px] text-white/70" />
      <Volume2 className="mr-[6px] size-[12px]" />
      <span className="w-[25px]">ENG</span>
      <span className="w-[29px]">16:53</span>
      <MessageSquareText className="mr-[16px] size-[12px] text-[#35051a]" fill="white" />
    </div>
  </div>
);

export default function App() {
  return (
    <div className="relative flex h-[720px] w-[1280px] flex-col overflow-hidden bg-[#e6e6e6] font-['Open_Sans','Noto_Sans',sans-serif]">
      <TitleBar />
      <Ribbon />
      <FormulaBar />
      <Sheet />
      <SheetTabs />
      <StatusBar />
      <Taskbar />
    </div>
  );
}
